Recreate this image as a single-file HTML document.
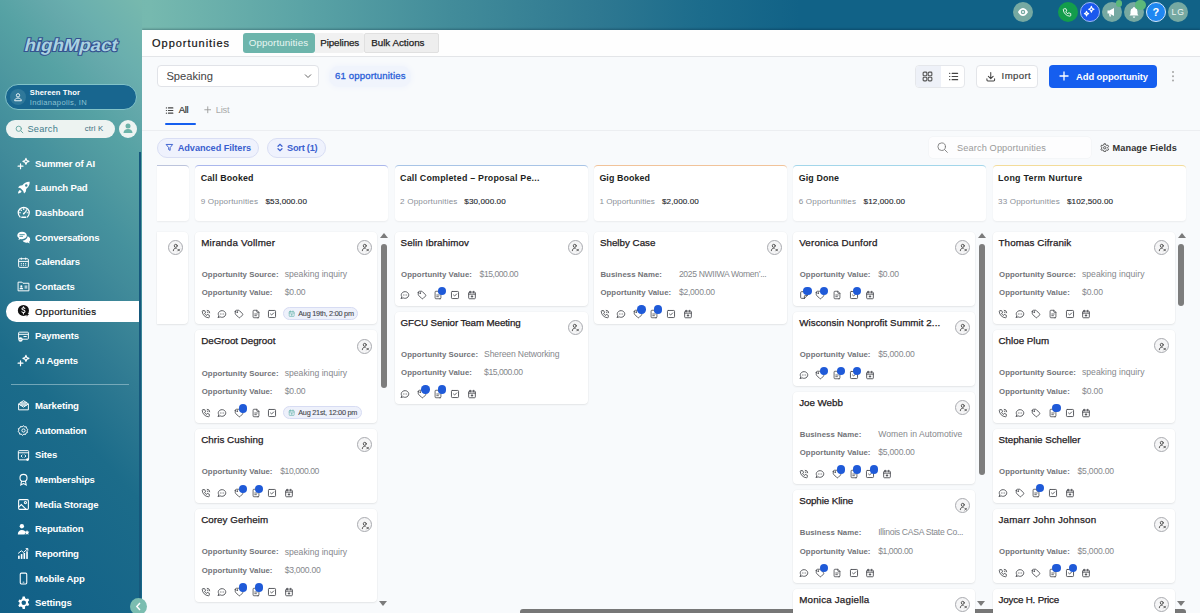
<!DOCTYPE html><html><head><meta charset="utf-8"><style>
*{box-sizing:border-box;margin:0;padding:0}
html,body{width:1200px;height:613px;overflow:hidden}
body{font-family:"Liberation Sans",sans-serif;position:relative;
background:linear-gradient(90deg,#6eb4ad 0px,#76b9af 150px,#5ba4a6 300px,#428c9a 450px,#2e7891 600px,#1c6c8c 700px,#116287 800px,#116287 1200px);}
#side{position:absolute;left:0;top:0;width:142px;height:613px;background:linear-gradient(228deg,#77b9ae 0px,#6aafae 52px,#65a9ab 73px,#56a2a4 111px,#4f99a0 145px,#45919d 178px,#418b9a 203px,#2f7a92 270px,#1c6c8a 337px,#136288 470px,#125f86 520px)}
.t{position:absolute;white-space:nowrap;line-height:1;-webkit-font-smoothing:antialiased}
.ic{position:absolute;overflow:visible}
.bdg{position:absolute;width:8.4px;height:8.4px;border-radius:50%;background:#1f5ad8}
.colh{position:absolute;top:165px;height:56px;background:#fff;border-top:1.2px solid;border-radius:4px;box-shadow:0 1px 2px rgba(0,0,0,.06)}
.card{position:absolute;background:#fff;border-radius:4px;box-shadow:0 1px 2px rgba(0,0,0,.07),0 0 0 0.5px rgba(0,0,0,.03)}
.avc{position:absolute;width:15px;height:15px;border-radius:50%;border:1px solid #a9abb0;background:#f5f5f6}
.chip{position:absolute;height:13.4px;border-radius:7px;background:#eef1fb;border:1px solid #d7dcf3}
.sarr{position:absolute;width:0;height:0;border-left:4px solid transparent;border-right:4px solid transparent}
.sarr.up{border-bottom:5px solid #7b7b7b}
.sarr.dn{border-top:5px solid #7b7b7b}
.sthumb{position:absolute;width:6px;border-radius:3px;background:#7d7d7d}
#main{position:absolute;left:142px;top:30px;width:1058px;height:583px;background:#f8fafc;box-shadow:0 -1px 2px rgba(0,20,40,.3)}
#hdr{position:absolute;left:142px;top:30px;width:1058px;height:27px;background:#fefefe;border-bottom:1px solid #e3e5e8}
.box{position:absolute}
</style></head><body>
<svg width="0" height="0" style="position:absolute">
<defs>
<symbol id="i-phone" viewBox="0 0 24 24"><g fill="none" stroke="currentColor" stroke-width="2.1" stroke-linecap="round" stroke-linejoin="round"><path d="M5 4h4l2 5-2.5 1.5a11 11 0 0 0 5 5L15 13l5 2v4a2 2 0 0 1-2 2A16 16 0 0 1 3 6a2 2 0 0 1 2-2"/><path d="M15 3a6 6 0 0 1 6 6"/><path d="M15 7a2 2 0 0 1 2 2"/></g></symbol>
<symbol id="i-chat" viewBox="0 0 24 24"><g fill="none" stroke="currentColor" stroke-width="2.2" stroke-linecap="round" stroke-linejoin="round"><path d="M3 20l1.3-3.9C1.976 12.663 2.874 8.228 6.4 5.726c3.526-2.501 8.59-2.296 11.845.48 3.255 2.777 3.695 7.266 1.029 10.501C16.608 19.942 11.659 20.922 7.7 19L3 20"/><path d="M8 12h.01M12 12h.01M16 12h.01"/></g></symbol>
<symbol id="i-tag" viewBox="0 0 24 24"><g fill="none" stroke="currentColor" stroke-width="2.2" stroke-linecap="round" stroke-linejoin="round"><circle cx="7.5" cy="7.5" r="1"/><path d="M3 6v5.172a2 2 0 0 0 .586 1.414l7.71 7.71a2.41 2.41 0 0 0 3.408 0l5.592-5.592a2.41 2.41 0 0 0 0-3.408l-7.71-7.71A2 2 0 0 0 11.172 3H6a3 3 0 0 0-3 3z"/></g></symbol>
<symbol id="i-doc" viewBox="0 0 24 24"><g fill="none" stroke="currentColor" stroke-width="2" stroke-linecap="round" stroke-linejoin="round"><path d="M14 3v4a1 1 0 0 0 1 1h4"/><path d="M17 21H7a2 2 0 0 1-2-2V5a2 2 0 0 1 2-2h7l5 5v11a2 2 0 0 1-2 2z"/><path d="M9 12h6M9 16h4"/></g></symbol>
<symbol id="i-check" viewBox="0 0 24 24"><g fill="none" stroke="currentColor" stroke-width="2.2" stroke-linecap="round" stroke-linejoin="round"><rect x="3.5" y="3.5" width="17" height="17" rx="2"/><path d="M8.5 12l2.5 2.5 5-5"/></g></symbol>
<symbol id="i-cal" viewBox="0 0 24 24"><g fill="none" stroke="currentColor" stroke-width="2.2" stroke-linecap="round" stroke-linejoin="round"><rect x="4" y="5" width="16" height="16" rx="2"/><path d="M16 3v4M8 3v4M4 10h16M10 15.5h4M12 13.5v4"/></g></symbol>
<symbol id="i-note" viewBox="0 0 24 24"><g fill="none" stroke="currentColor" stroke-width="2.2" stroke-linecap="round" stroke-linejoin="round"><path d="M13 20H6a2 2 0 0 1-2-2V6a2 2 0 0 1 2-2h12a2 2 0 0 1 2 2v7l-7 7z"/><path d="M13 20v-5a2 2 0 0 1 2-2h5"/></g></symbol>
<symbol id="i-user" viewBox="0 0 24 24"><g fill="none" stroke="currentColor" stroke-width="2.4" stroke-linecap="round" stroke-linejoin="round"><circle cx="10" cy="7.5" r="4"/><path d="M3.5 20.5c0-4 2.8-6.5 6.5-6.5h1.5"/><path d="M15.5 16.5l4.5 4.5M20 16.5l-4.5 4.5"/></g></symbol>
</defs></svg>
<div id="main"></div><div id="hdr"></div>
<svg width="0" height="0" style="position:absolute"><defs>
<symbol id="s-spark" viewBox="0 0 24 24"><g fill="none" stroke="#fff" stroke-width="2.2" stroke-linecap="round" stroke-linejoin="round"><path d="M16.5 2.5l1.6 3.9 3.9 1.6-3.9 1.6-1.6 3.9-1.6-3.9L11 8l3.9-1.6z"/><path d="M6.5 12.5v9M2 17h9"/></g></symbol>
<symbol id="s-rocket" viewBox="0 0 24 24"><path fill="#fff" d="M22.5 1.5c-5.3-.4-9.6 1.9-12.8 6.2L4.8 8.4 1.8 11.5l4.6 1.4 4.7 4.7 1.4 4.6 3.1-3 .7-4.9c4.3-3.2 6.6-7.5 6.2-12.8zM16.5 10a2.2 2.2 0 1 1 0-4.4 2.2 2.2 0 0 1 0 4.4zM5.2 15.8c-2 .7-3.2 2.8-3.4 6.4 3.6-.2 5.7-1.4 6.4-3.4z"/></symbol>
<symbol id="s-dash" viewBox="0 0 24 24"><g fill="none" stroke="#fff" stroke-width="2.2" stroke-linecap="round"><path d="M5.5 19.5A9.8 9.8 0 1 1 18.5 19.5"/><path d="M12 13.5l4-4"/><path d="M12 4.5v1.5M4.5 12H6M18 12h1.5M6.8 6.8l1 1M17.2 6.8l-1 1"/></g><rect x="7.5" y="18.5" width="9" height="3" rx="1" fill="#fff"/><circle cx="12" cy="13.5" r="1.6" fill="#fff"/></symbol>
<symbol id="s-conv" viewBox="0 0 24 24"><path fill="#fff" d="M9 1.5c4.7 0 8.5 2.9 8.5 6.5s-3.8 6.5-8.5 6.5c-.9 0-1.7-.1-2.5-.3L2.5 16l1-3.3C1.9 11.5 .5 9.9.5 8 .5 4.4 4.3 1.5 9 1.5z"/><path fill="#fff" d="M18.8 9.5c2.8.9 4.7 3 4.7 5.5 0 1.5-.7 2.9-1.9 3.9l.9 3.1-3.7-1.6c-.7.2-1.5.3-2.3.3-2.9 0-5.4-1.3-6.6-3.2 4.7-.4 8.5-3.5 8.9-8z"/><path stroke="#3b8d9d" stroke-width="1.6" stroke-linecap="round" d="M5 6.5h8M5 9.5h5"/></symbol>
<symbol id="s-cal" viewBox="0 0 24 24"><g fill="none" stroke="#fff" stroke-width="1.8"><rect x="3" y="5" width="18" height="16" rx="2"/><path d="M3 10h18M8 3v4M16 3v4M7 14h2M11 14h2M15 14h2M7 17h2M11 17h2M15 17h2"/></g></symbol>
<symbol id="s-contact" viewBox="0 0 24 24"><g fill="none" stroke="#fff" stroke-width="1.8"><path d="M2 4h7l2 2h11v14H2z"/></g><circle cx="8" cy="11.5" r="2" fill="#fff"/><path fill="#fff" d="M4.5 17c0-2 1.5-3 3.5-3s3.5 1 3.5 3z"/><rect x="14" y="10" width="5" height="6" fill="#fff" opacity=".6"/></symbol>
<symbol id="s-opp" viewBox="0 0 24 24"><circle cx="11" cy="11" r="9.5" fill="#111"/><path fill="none" stroke="#fff" stroke-width="1.8" stroke-linecap="round" d="M13.5 7.5c-.5-.8-1.5-1.2-2.5-1.2-1.5 0-2.6.8-2.6 2s1 1.7 2.6 2.1 2.7 1 2.7 2.3-1.2 2-2.7 2c-1.1 0-2.1-.5-2.6-1.3M11 4.8v1.5M11 15.7v1.5"/><path fill="#111" d="M15 15l6 3-2.5 1L17 22z"/></symbol>
<symbol id="s-pay" viewBox="0 0 24 24"><g fill="none" stroke="#fff" stroke-width="1.8"><rect x="3" y="4" width="18" height="13" rx="1.5"/><path d="M3 8h18M12 12h6"/></g><circle cx="6.5" cy="17.5" r="4" fill="#fff"/><path d="M4.8 17.5l1.2 1.2 2.2-2.2" stroke="#3d8e9e" stroke-width="1.4" fill="none"/></symbol>
<symbol id="s-mkt" viewBox="0 0 24 24"><g fill="none" stroke="#fff" stroke-width="1.8"><path d="M3 9l9-6 9 6v11H3z"/><path d="M3 9l9 6 9-6"/><rect x="7" y="6" width="10" height="6" fill="#fff" opacity=".7"/></g></symbol>
<symbol id="s-auto" viewBox="0 0 24 24"><g fill="none" stroke="#fff" stroke-width="1.8"><path d="M12 3l2 2.5 3-.5.5 3 2.5 2-1.5 2.7 1 2.8-2.8 1-1 2.9-3-.7L10 21l-2-2.4-3 .3-.5-3L2 14l1.5-2.6L2.5 8.5l2.8-1L6.5 4.6l3 .7z"/><circle cx="12" cy="12" r="3"/></g></symbol>
<symbol id="s-sites" viewBox="0 0 24 24"><g fill="none" stroke="#fff" stroke-width="1.8"><rect x="2.5" y="3" width="19" height="17" rx="1.5"/><path d="M2.5 7h19M10 10.5l-2.5 2.5 2.5 2.5M14 10.5l2.5 2.5-2.5 2.5"/></g><circle cx="19.5" cy="19.5" r="2.5" fill="#fff"/></symbol>
<symbol id="s-member" viewBox="0 0 24 24"><g fill="none" stroke="#fff" stroke-width="2"><circle cx="12" cy="9" r="6.5"/><path d="M8.5 14.5L7 22l5-2.5 5 2.5-1.5-7.5"/></g></symbol>
<symbol id="s-media" viewBox="0 0 24 24"><g fill="none" stroke="#fff" stroke-width="2"><rect x="3" y="3" width="18" height="18" rx="2"/><path d="M3 17l5-5 9 9"/><circle cx="15.5" cy="8.5" r="2"/></g></symbol>
<symbol id="s-rep" viewBox="0 0 24 24"><circle cx="9" cy="6" r="4" fill="#fff"/><path fill="#fff" d="M1.5 21c0-5 3-8 7.5-8s6 2 7 4l-2 4z"/><path fill="#fff" d="M18.5 13l1.4 2.9 3.1.4-2.3 2.2.6 3.1-2.8-1.5-2.8 1.5.6-3.1-2.3-2.2 3.1-.4z"/></symbol>
<symbol id="s-report" viewBox="0 0 24 24"><g fill="#fff"><rect x="2" y="16" width="3" height="6"/><rect x="7" y="13" width="3" height="9"/><rect x="12" y="11" width="3" height="11"/><rect x="17" y="8" width="3" height="14"/></g><path fill="none" stroke="#fff" stroke-width="1.8" d="M2 12l6-5 4 3 8-7M16 3h4v4"/></symbol>
<symbol id="s-mobile" viewBox="0 0 24 24"><g fill="none" stroke="#fff" stroke-width="2"><rect x="6" y="2" width="12" height="20" rx="2"/></g><rect x="10.5" y="18" width="3" height="1.5" fill="#fff"/></symbol>
<symbol id="s-settings" viewBox="0 0 24 24"><path fill="#fff" fill-rule="evenodd" d="M10 1h4l.6 3 2.3 1.3 2.9-1 2 3.4-2.3 2v2.6l2.3 2-2 3.4-2.9-1-2.3 1.3L14 23h-4l-.6-3-2.3-1.3-2.9 1-2-3.4 2.3-2v-2.6l-2.3-2 2-3.4 2.9 1L9.4 4zM12 8a4 4 0 1 0 0 8 4 4 0 0 0 0-8z"/></symbol>
</defs></svg>
<div id="side"></div><svg class="box" style="left:18px;top:33px;width:106px;height:26px" viewBox="0 0 106 26"><g transform="translate(4 0) skewX(-14)"><text x="6" y="18" textLength="93" lengthAdjust="spacingAndGlyphs" font-family="Liberation Sans" font-weight="700" font-size="17.5" fill="#a9d1e1" stroke="#34528f" stroke-width="2.2" paint-order="stroke" stroke-linejoin="miter">highMpact</text></g></svg><div class="box" style="left:5px;top:83.5px;width:131.5px;height:26px;border-radius:13px;background:#18668f;border:1px solid #82c3c8"></div><div class="box" style="left:10px;top:88.5px;width:16px;height:16px;border-radius:50%;background:#2f789a"></div><svg class="box" style="left:13px;top:91.5px;width:10px;height:10px" viewBox="0 0 24 24"><g fill="none" stroke="#e8f2f5" stroke-width="2.4"><circle cx="12" cy="8" r="4"/><path d="M4 21c0-4 3.5-6.5 8-6.5s8 2.5 8 6.5z"/></g></svg><div class="box" style="left:5.5px;top:120px;width:109.5px;height:17.6px;border-radius:9px;background:#edf3f1"></div><svg class="box" style="left:15px;top:124.5px;width:9px;height:9px" viewBox="0 0 24 24"><g fill="none" stroke="#6aa9a5" stroke-width="2.6" stroke-linecap="round"><circle cx="10" cy="10" r="7"/><path d="M15.5 15.5L21 21"/></g></svg><div class="box" style="left:119px;top:119.5px;width:18px;height:18px;border-radius:50%;background:#eef4f2"></div><svg class="box" style="left:122px;top:122px;width:12px;height:12px" viewBox="0 0 24 24"><circle cx="12" cy="8" r="5" fill="#6db3a9"/><path fill="#6db3a9" d="M3 22c0-5 4-8 9-8s9 3 9 8z"/></svg><div class="box" style="left:138.6px;top:151.5px;width:2.8px;height:462px;background:#16587c"></div><div class="box" style="left:11px;top:384px;width:118px;height:1px;background:#8fb9c7;opacity:.75"></div><svg class="box" style="left:17.3px;top:157.4px;width:13px;height:13px"><use href="#s-spark"/></svg><svg class="box" style="left:17.05px;top:181.05px;width:13.5px;height:13.5px"><use href="#s-rocket"/></svg><svg class="box" style="left:17.05px;top:205.85px;width:13.5px;height:13.5px"><use href="#s-dash"/></svg><svg class="box" style="left:17.05px;top:230.55px;width:13.5px;height:13.5px"><use href="#s-conv"/></svg><svg class="box" style="left:17.3px;top:255.5px;width:13px;height:13px"><use href="#s-cal"/></svg><svg class="box" style="left:17.3px;top:280.1px;width:13px;height:13px"><use href="#s-contact"/></svg><div class="box" style="left:6px;top:301.0px;width:133px;height:20.6px;background:#fff;border-radius:10.3px 0 0 10.3px"></div><svg class="box" style="left:16.6px;top:304.3px;width:14px;height:14px"><use href="#s-opp"/></svg><svg class="box" style="left:17.3px;top:329.5px;width:13px;height:13px"><use href="#s-pay"/></svg><svg class="box" style="left:17.3px;top:354.1px;width:13px;height:13px"><use href="#s-spark"/></svg><svg class="box" style="left:17.3px;top:399.1px;width:13px;height:13px"><use href="#s-mkt"/></svg><svg class="box" style="left:17.3px;top:423.8px;width:13px;height:13px"><use href="#s-auto"/></svg><svg class="box" style="left:17.3px;top:448.5px;width:13px;height:13px"><use href="#s-sites"/></svg><svg class="box" style="left:17.3px;top:473.1px;width:13px;height:13px"><use href="#s-member"/></svg><svg class="box" style="left:17.3px;top:497.8px;width:13px;height:13px"><use href="#s-media"/></svg><svg class="box" style="left:17.3px;top:522.5px;width:13px;height:13px"><use href="#s-rep"/></svg><svg class="box" style="left:17.3px;top:547.1px;width:13px;height:13px"><use href="#s-report"/></svg><svg class="box" style="left:17.3px;top:571.8px;width:13px;height:13px"><use href="#s-mobile"/></svg><svg class="box" style="left:17.05px;top:595.55px;width:13.5px;height:13.5px"><use href="#s-settings"/></svg><div class="box" style="left:1012.6px;top:1.8000000000000007px;width:20px;height:20px;border-radius:50%;background:#76a9a2;"></div><svg class="box" style="left:1016.6px;top:6.8px;width:12px;height:10px" viewBox="0 0 24 20"><path fill="#fff" d="M12 2C6 2 2 10 2 10s4 8 10 8 10-8 10-8-4-8-10-8zm0 12.5a4.5 4.5 0 1 1 0-9 4.5 4.5 0 0 1 0 9z"/><circle cx="12" cy="10" r="2" fill="#fff"/></svg><div class="box" style="left:1057.6px;top:1.8000000000000007px;width:20px;height:20px;border-radius:50%;background:#139d4c;"></div><svg class="box" style="left:1062.4px;top:6.6px;width:10.5px;height:10.5px" viewBox="0 0 24 24"><path d="M5 4h4l2 5-2.5 1.5a11 11 0 0 0 5 5L15 13l5 2v4a2 2 0 0 1-2 2A16 16 0 0 1 3 6a2 2 0 0 1 2-2" fill="none" stroke="#fff" stroke-width="2" stroke-linejoin="round"/></svg><div class="box" style="left:1079.6px;top:1.6000000000000014px;width:20.4px;height:20.4px;border-radius:50%;background:#1b58ee;border:1px solid #9fb8f7;"></div><svg class="box" style="left:1082.3px;top:4.6px;width:14.5px;height:14.5px" viewBox="0 0 24 24"><g fill="none" stroke="#fff" stroke-width="1.9" stroke-linejoin="round"><path d="M15.5 2c.4 3 1.5 4.6 4.5 5-3 .4-4.1 2-4.5 5-.4-3-1.5-4.6-4.5-5 3-.4 4.1-2 4.5-5z"/><path d="M7.5 10.5c.3 2.3 1.2 3.5 3.5 3.8-2.3.3-3.2 1.5-3.5 3.8-.3-2.3-1.2-3.5-3.5-3.8 2.3-.3 3.2-1.5 3.5-3.8z"/></g></svg><div class="box" style="left:1101.5px;top:1.8000000000000007px;width:20px;height:20px;border-radius:50%;background:#76a9a2;"></div><svg class="box" style="left:1105.5px;top:6px;width:12px;height:12px" viewBox="0 0 24 24"><path fill="#fff" d="M3 9h4l9-5v16l-9-5H3z"/><path fill="#fff" d="M6 15h3l1 6H7z"/></svg><div class="box" style="left:1115.6px;top:0.3999999999999999px;width:6.4px;height:6.4px;border-radius:50%;background:#5cb87a;"></div><div class="box" style="left:1124px;top:1.8000000000000007px;width:20px;height:20px;border-radius:50%;background:#78a9a1;"></div><svg class="box" style="left:1128px;top:5.5px;width:12px;height:12px" viewBox="0 0 24 24"><path fill="#fff" d="M12 2a2 2 0 0 1 2 2 7 7 0 0 1 5 7v5l2 3H3l2-3v-5a7 7 0 0 1 5-7 2 2 0 0 1 2-2zM9.5 21h5a2.5 2.5 0 0 1-5 0z"/></svg><div class="box" style="left:1135.3px;top:-0.40000000000000036px;width:10.4px;height:10.4px;border-radius:50%;background:#5cb87a;"></div><div class="box" style="left:1146.0px;top:1.6000000000000014px;width:20.4px;height:20.4px;border-radius:50%;background:#1f87f2;border:1px solid #d5e6fb;"></div><div class="box" style="left:1168.2px;top:1.8000000000000007px;width:20px;height:20px;border-radius:50%;background:#76a9a2;"></div><div class="box" style="left:243px;top:33px;width:71.7px;height:20px;background:#6db5ac;border-radius:3px"></div><div class="box" style="left:314.7px;top:33px;width:49.5px;height:20px;background:#f1f1f1;border-radius:0 2px 2px 0"></div><div class="box" style="left:364.2px;top:32.8px;width:74.8px;height:20.4px;background:#eeeeee;border:1px solid #e0e0e0;border-radius:2px"></div><div class="box" style="left:157.4px;top:65.4px;width:161.6px;height:22px;background:#fff;border:1px solid #e1e3e8;border-radius:4px"></div><svg class="box" style="left:304px;top:73px;width:8px;height:6px" viewBox="0 0 8 6"><path d="M1 1.5l3 3 3-3" fill="none" stroke="#666" stroke-width="1"/></svg><div class="box" style="left:329px;top:66px;width:82px;height:21px;background:#f0f4fc;border-radius:10px;box-shadow:0 0 5px 1px #f0f4fc"></div><div class="box" style="left:914.7px;top:64.8px;width:50.7px;height:23.4px;background:#fff;border:1px solid #e5e7eb;border-radius:4px;overflow:hidden"><div style="position:absolute;left:0;top:0;width:25px;height:100%;background:#eef1f8"></div></div><svg class="box" style="left:921.5px;top:71px;width:11px;height:11px" viewBox="0 0 24 24"><g fill="none" stroke="#555" stroke-width="2.4"><rect x="2.5" y="2.5" width="8" height="8" rx="2"/><rect x="13.5" y="2.5" width="8" height="8" rx="2"/><rect x="2.5" y="13.5" width="8" height="8" rx="2"/><rect x="13.5" y="13.5" width="8" height="8" rx="2"/></g></svg><svg class="box" style="left:947.5px;top:71px;width:11px;height:11px" viewBox="0 0 24 24"><g fill="none" stroke="#444" stroke-width="2.6" stroke-linecap="round"><path d="M9 5h12M9 12h12M9 19h12M3.5 5h.5M3.5 12h.5M3.5 19h.5"/></g></svg><div class="box" style="left:976.3px;top:65.2px;width:62.1px;height:22.8px;background:#fff;border:1px solid #e3e5e9;border-radius:4px"></div><svg class="box" style="left:984.5px;top:70.5px;width:11.5px;height:11.5px" viewBox="0 0 24 24"><g fill="none" stroke="#444" stroke-width="2.2" stroke-linecap="round" stroke-linejoin="round"><path d="M4 16v3a2 2 0 0 0 2 2h12a2 2 0 0 0 2-2v-3M7 11l5 5 5-5M12 3v13"/></g></svg><div class="box" style="left:1049px;top:65.2px;width:108px;height:22.5px;background:#155eef;border-radius:4px"></div><svg class="box" style="left:1059.4px;top:71.4px;width:10px;height:10px" viewBox="0 0 10 10"><path d="M5 0.5v9M0.5 5h9" stroke="#fff" stroke-width="1.3"/></svg><div class="box" style="left:1172.3px;top:71px;width:1.6px;height:1.6px;background:#a5a5a5;border-radius:1px;box-shadow:0 4.3px 0 #a5a5a5,0 8.6px 0 #a5a5a5"></div><svg class="box" style="left:164.8px;top:105.5px;width:9px;height:9px" viewBox="0 0 24 24"><g fill="none" stroke="#444" stroke-width="2.8" stroke-linecap="round"><path d="M9 5h12M9 12h12M9 19h12M3.5 5h.5M3.5 12h.5M3.5 19h.5"/></g></svg><div class="box" style="left:164.6px;top:123.2px;width:31.6px;height:2px;background:#155eef;border-radius:1px"></div><svg class="box" style="left:203.8px;top:106px;width:7.5px;height:7.5px" viewBox="0 0 10 10"><path d="M5 0.5v9M0.5 5h9" stroke="#9a9a9a" stroke-width="1.2"/></svg><div class="box" style="left:142px;top:129.5px;width:1058px;height:1px;background:#eceef1"></div><div class="box" style="left:157.1px;top:138.2px;width:102.1px;height:19.5px;background:#eff2fd;border:1px solid #d9def4;border-radius:10px"></div><svg class="box" style="left:165.3px;top:143.2px;width:8.8px;height:8.8px" viewBox="0 0 24 24"><path d="M3 4h18l-7 8.5V20l-4-2v-5.5z" fill="none" stroke="#3a5fcf" stroke-width="2.6" stroke-linejoin="round"/></svg><div class="box" style="left:266.8px;top:138.2px;width:59.6px;height:19.5px;background:#eff2fd;border:1px solid #d9def4;border-radius:10px"></div><svg class="box" style="left:276.8px;top:143px;width:6px;height:9px" viewBox="0 0 12 18"><path d="M2 6.5l4-4 4 4M2 11.5l4 4 4-4" fill="none" stroke="#3a5fcf" stroke-width="2.4" stroke-linecap="round"/></svg><div class="box" style="left:928.7px;top:137px;width:162.3px;height:20.5px;background:#fdfdfe;border-radius:4px;box-shadow:0 0 0 0.5px #f0f1f3"></div><svg class="box" style="left:936px;top:140.8px;width:13px;height:13px" viewBox="0 0 24 24"><g fill="none" stroke="#777" stroke-width="1.6" stroke-linecap="round"><circle cx="10.5" cy="10.5" r="7"/><path d="M16 16l5 5"/></g></svg><svg class="box" style="left:1100px;top:142.5px;width:9.5px;height:9.5px" viewBox="0 0 24 24"><g fill="none" stroke="#444" stroke-width="2.2"><path d="M10 2h4l.6 3 2.3 1.3 2.9-1 2 3.4-2.3 2v2.6l2.3 2-2 3.4-2.9-1-2.3 1.3L14 22h-4l-.6-3-2.3-1.3-2.9 1-2-3.4 2.3-2v-2.6l-2.3-2 2-3.4 2.9 1L9.4 5z"/><circle cx="12" cy="12" r="3"/></g></svg><div class="box" style="left:130px;top:598px;width:17px;height:17px;border-radius:50%;background:#7bbdb0"></div><svg class="box" style="left:135px;top:602px;width:7px;height:9px" viewBox="0 0 7 9"><path d="M5 1L1.8 4.5 5 8" fill="none" stroke="#fff" stroke-width="1.4"/></svg><div class="box" style="left:520px;top:608.8px;width:666px;height:6px;border-radius:3px;background:#777"></div><div class="colh" style="left:157px;width:31.8px;border-top-color:#bcc4dc;border-radius:0 4px 4px 0"></div><div class="card" style="left:157px;top:231.5px;width:30.6px;height:92.6px;border-radius:0 4px 4px 0"></div><div class="avc" style="left:168.1px;top:239.9px"><svg style="position:absolute;left:2.6px;top:2.4px;width:9px;height:9px;color:#4a4a4a"><use href="#i-user"/></svg></div><div class="colh" style="left:195.2px;width:193px;border-top-color:#aab7ec"></div><div class="card" style="left:195.2px;top:231.5px;width:182px;height:92.6px"></div><div class="avc" style="left:357.09999999999997px;top:239.6px"><svg style="position:absolute;left:2.6px;top:2.4px;width:9px;height:9px;color:#4a4a4a"><use href="#i-user"/></svg></div><svg class="ic" style="left:200.79999999999998px;top:309.0px;width:10px;height:10px;color:#4d4f54"><use href="#i-phone"/></svg><svg class="ic" style="left:217.39999999999998px;top:309.0px;width:10px;height:10px;color:#4d4f54"><use href="#i-chat"/></svg><svg class="ic" style="left:234.0px;top:309.0px;width:10px;height:10px;color:#4d4f54"><use href="#i-tag"/></svg><svg class="ic" style="left:250.6px;top:309.0px;width:10px;height:10px;color:#4d4f54"><use href="#i-doc"/></svg><svg class="ic" style="left:267.2px;top:309.0px;width:10px;height:10px;color:#4d4f54"><use href="#i-check"/></svg><div class="chip" style="left:283.2px;top:306.8px;width:75px"></div><svg class="ic" style="left:287.7px;top:310.3px;width:7.4px;height:7.4px;color:#6fb8b0"><use href="#i-cal"/></svg><div class="card" style="left:195.2px;top:330.4px;width:182px;height:92.6px"></div><div class="avc" style="left:357.09999999999997px;top:338.5px"><svg style="position:absolute;left:2.6px;top:2.4px;width:9px;height:9px;color:#4a4a4a"><use href="#i-user"/></svg></div><svg class="ic" style="left:200.79999999999998px;top:407.9px;width:10px;height:10px;color:#4d4f54"><use href="#i-phone"/></svg><svg class="ic" style="left:217.39999999999998px;top:407.9px;width:10px;height:10px;color:#4d4f54"><use href="#i-chat"/></svg><svg class="ic" style="left:234.0px;top:407.9px;width:10px;height:10px;color:#4d4f54"><use href="#i-tag"/></svg><div class="bdg" style="left:238.5px;top:404.29999999999995px"></div><svg class="ic" style="left:250.6px;top:407.9px;width:10px;height:10px;color:#4d4f54"><use href="#i-doc"/></svg><svg class="ic" style="left:267.2px;top:407.9px;width:10px;height:10px;color:#4d4f54"><use href="#i-check"/></svg><div class="chip" style="left:283.2px;top:405.7px;width:79px"></div><svg class="ic" style="left:287.7px;top:409.2px;width:7.4px;height:7.4px;color:#6fb8b0"><use href="#i-cal"/></svg><div class="card" style="left:195.2px;top:429.29999999999995px;width:182px;height:74px"></div><div class="avc" style="left:357.09999999999997px;top:437.4px"><svg style="position:absolute;left:2.6px;top:2.4px;width:9px;height:9px;color:#4a4a4a"><use href="#i-user"/></svg></div><svg class="ic" style="left:200.79999999999998px;top:488.19999999999993px;width:10px;height:10px;color:#4d4f54"><use href="#i-phone"/></svg><svg class="ic" style="left:217.39999999999998px;top:488.19999999999993px;width:10px;height:10px;color:#4d4f54"><use href="#i-chat"/></svg><svg class="ic" style="left:234.0px;top:488.19999999999993px;width:10px;height:10px;color:#4d4f54"><use href="#i-tag"/></svg><div class="bdg" style="left:238.5px;top:484.5999999999999px"></div><svg class="ic" style="left:250.6px;top:488.19999999999993px;width:10px;height:10px;color:#4d4f54"><use href="#i-doc"/></svg><div class="bdg" style="left:255.1px;top:484.5999999999999px"></div><svg class="ic" style="left:267.2px;top:488.19999999999993px;width:10px;height:10px;color:#4d4f54"><use href="#i-check"/></svg><svg class="ic" style="left:283.79999999999995px;top:488.19999999999993px;width:10px;height:10px;color:#4d4f54"><use href="#i-cal"/></svg><div class="card" style="left:195.2px;top:509.29999999999995px;width:182px;height:92.6px"></div><div class="avc" style="left:357.09999999999997px;top:517.4px"><svg style="position:absolute;left:2.6px;top:2.4px;width:9px;height:9px;color:#4a4a4a"><use href="#i-user"/></svg></div><svg class="ic" style="left:200.79999999999998px;top:586.8000000000001px;width:10px;height:10px;color:#4d4f54"><use href="#i-phone"/></svg><svg class="ic" style="left:217.39999999999998px;top:586.8000000000001px;width:10px;height:10px;color:#4d4f54"><use href="#i-chat"/></svg><svg class="ic" style="left:234.0px;top:586.8000000000001px;width:10px;height:10px;color:#4d4f54"><use href="#i-tag"/></svg><div class="bdg" style="left:238.5px;top:583.2px"></div><svg class="ic" style="left:250.6px;top:586.8000000000001px;width:10px;height:10px;color:#4d4f54"><use href="#i-doc"/></svg><div class="bdg" style="left:255.1px;top:583.2px"></div><svg class="ic" style="left:267.2px;top:586.8000000000001px;width:10px;height:10px;color:#4d4f54"><use href="#i-check"/></svg><svg class="ic" style="left:283.79999999999995px;top:586.8000000000001px;width:10px;height:10px;color:#4d4f54"><use href="#i-cal"/></svg><div class="sarr up" style="left:380.2px;top:233px"></div><div class="sarr dn" style="left:379.4px;top:601px"></div><div class="sthumb" style="left:380.7px;top:244px;height:144px"></div><div class="colh" style="left:394.6px;width:193px;border-top-color:#a8c4e6"></div><div class="card" style="left:394.6px;top:231.5px;width:193px;height:74px"></div><div class="avc" style="left:567.5px;top:239.6px"><svg style="position:absolute;left:2.6px;top:2.4px;width:9px;height:9px;color:#4a4a4a"><use href="#i-user"/></svg></div><svg class="ic" style="left:400.20000000000005px;top:290.4px;width:10px;height:10px;color:#4d4f54"><use href="#i-chat"/></svg><svg class="ic" style="left:416.80000000000007px;top:290.4px;width:10px;height:10px;color:#4d4f54"><use href="#i-tag"/></svg><svg class="ic" style="left:433.40000000000003px;top:290.4px;width:10px;height:10px;color:#4d4f54"><use href="#i-doc"/></svg><div class="bdg" style="left:437.90000000000003px;top:286.79999999999995px"></div><svg class="ic" style="left:450.00000000000006px;top:290.4px;width:10px;height:10px;color:#4d4f54"><use href="#i-check"/></svg><svg class="ic" style="left:466.6px;top:290.4px;width:10px;height:10px;color:#4d4f54"><use href="#i-cal"/></svg><div class="card" style="left:394.6px;top:311.5px;width:193px;height:92.6px"></div><div class="avc" style="left:567.5px;top:319.6px"><svg style="position:absolute;left:2.6px;top:2.4px;width:9px;height:9px;color:#4a4a4a"><use href="#i-user"/></svg></div><svg class="ic" style="left:400.20000000000005px;top:389.0px;width:10px;height:10px;color:#4d4f54"><use href="#i-chat"/></svg><svg class="ic" style="left:416.80000000000007px;top:389.0px;width:10px;height:10px;color:#4d4f54"><use href="#i-tag"/></svg><div class="bdg" style="left:421.30000000000007px;top:385.4px"></div><svg class="ic" style="left:433.40000000000003px;top:389.0px;width:10px;height:10px;color:#4d4f54"><use href="#i-doc"/></svg><div class="bdg" style="left:437.90000000000003px;top:385.4px"></div><svg class="ic" style="left:450.00000000000006px;top:389.0px;width:10px;height:10px;color:#4d4f54"><use href="#i-check"/></svg><svg class="ic" style="left:466.6px;top:389.0px;width:10px;height:10px;color:#4d4f54"><use href="#i-cal"/></svg><div class="colh" style="left:593.9px;width:193px;border-top-color:#f1c39a"></div><div class="card" style="left:593.9px;top:231.5px;width:193px;height:92.6px"></div><div class="avc" style="left:766.8px;top:239.6px"><svg style="position:absolute;left:2.6px;top:2.4px;width:9px;height:9px;color:#4a4a4a"><use href="#i-user"/></svg></div><svg class="ic" style="left:599.5px;top:309.0px;width:10px;height:10px;color:#4d4f54"><use href="#i-phone"/></svg><svg class="ic" style="left:616.1px;top:309.0px;width:10px;height:10px;color:#4d4f54"><use href="#i-chat"/></svg><svg class="ic" style="left:632.7px;top:309.0px;width:10px;height:10px;color:#4d4f54"><use href="#i-tag"/></svg><div class="bdg" style="left:637.2px;top:305.4px"></div><svg class="ic" style="left:649.3px;top:309.0px;width:10px;height:10px;color:#4d4f54"><use href="#i-doc"/></svg><div class="bdg" style="left:653.8px;top:305.4px"></div><svg class="ic" style="left:665.9px;top:309.0px;width:10px;height:10px;color:#4d4f54"><use href="#i-check"/></svg><svg class="ic" style="left:682.5px;top:309.0px;width:10px;height:10px;color:#4d4f54"><use href="#i-cal"/></svg><div class="colh" style="left:793.2px;width:193px;border-top-color:#a3d6ea"></div><div class="card" style="left:793.2px;top:231.5px;width:182px;height:74px"></div><div class="avc" style="left:955.1px;top:239.6px"><svg style="position:absolute;left:2.6px;top:2.4px;width:9px;height:9px;color:#4a4a4a"><use href="#i-user"/></svg></div><svg class="ic" style="left:798.8000000000001px;top:290.4px;width:10px;height:10px;color:#4d4f54"><use href="#i-note"/></svg><div class="bdg" style="left:803.3000000000001px;top:286.79999999999995px"></div><svg class="ic" style="left:815.4000000000001px;top:290.4px;width:10px;height:10px;color:#4d4f54"><use href="#i-tag"/></svg><div class="bdg" style="left:819.9000000000001px;top:286.79999999999995px"></div><svg class="ic" style="left:832.0000000000001px;top:290.4px;width:10px;height:10px;color:#4d4f54"><use href="#i-doc"/></svg><svg class="ic" style="left:848.6px;top:290.4px;width:10px;height:10px;color:#4d4f54"><use href="#i-check"/></svg><div class="bdg" style="left:853.1px;top:286.79999999999995px"></div><svg class="ic" style="left:865.2px;top:290.4px;width:10px;height:10px;color:#4d4f54"><use href="#i-cal"/></svg><div class="card" style="left:793.2px;top:311.5px;width:182px;height:74px"></div><div class="avc" style="left:955.1px;top:319.6px"><svg style="position:absolute;left:2.6px;top:2.4px;width:9px;height:9px;color:#4a4a4a"><use href="#i-user"/></svg></div><svg class="ic" style="left:798.8000000000001px;top:370.4px;width:10px;height:10px;color:#4d4f54"><use href="#i-chat"/></svg><svg class="ic" style="left:815.4000000000001px;top:370.4px;width:10px;height:10px;color:#4d4f54"><use href="#i-tag"/></svg><div class="bdg" style="left:819.9000000000001px;top:366.79999999999995px"></div><svg class="ic" style="left:832.0000000000001px;top:370.4px;width:10px;height:10px;color:#4d4f54"><use href="#i-doc"/></svg><div class="bdg" style="left:836.5000000000001px;top:366.79999999999995px"></div><svg class="ic" style="left:848.6px;top:370.4px;width:10px;height:10px;color:#4d4f54"><use href="#i-check"/></svg><div class="bdg" style="left:853.1px;top:366.79999999999995px"></div><svg class="ic" style="left:865.2px;top:370.4px;width:10px;height:10px;color:#4d4f54"><use href="#i-cal"/></svg><div class="card" style="left:793.2px;top:391.5px;width:182px;height:92.6px"></div><div class="avc" style="left:955.1px;top:399.6px"><svg style="position:absolute;left:2.6px;top:2.4px;width:9px;height:9px;color:#4a4a4a"><use href="#i-user"/></svg></div><svg class="ic" style="left:798.8000000000001px;top:469.0px;width:10px;height:10px;color:#4d4f54"><use href="#i-phone"/></svg><svg class="ic" style="left:815.4000000000001px;top:469.0px;width:10px;height:10px;color:#4d4f54"><use href="#i-chat"/></svg><svg class="ic" style="left:832.0000000000001px;top:469.0px;width:10px;height:10px;color:#4d4f54"><use href="#i-tag"/></svg><div class="bdg" style="left:836.5000000000001px;top:465.4px"></div><svg class="ic" style="left:848.6px;top:469.0px;width:10px;height:10px;color:#4d4f54"><use href="#i-doc"/></svg><div class="bdg" style="left:853.1px;top:465.4px"></div><svg class="ic" style="left:865.2px;top:469.0px;width:10px;height:10px;color:#4d4f54"><use href="#i-check"/></svg><div class="bdg" style="left:869.7px;top:465.4px"></div><svg class="ic" style="left:881.8000000000001px;top:469.0px;width:10px;height:10px;color:#4d4f54"><use href="#i-cal"/></svg><div class="card" style="left:793.2px;top:490.1px;width:182px;height:92.6px"></div><div class="avc" style="left:955.1px;top:498.20000000000005px"><svg style="position:absolute;left:2.6px;top:2.4px;width:9px;height:9px;color:#4a4a4a"><use href="#i-user"/></svg></div><svg class="ic" style="left:798.8000000000001px;top:567.6000000000001px;width:10px;height:10px;color:#4d4f54"><use href="#i-chat"/></svg><svg class="ic" style="left:815.4000000000001px;top:567.6000000000001px;width:10px;height:10px;color:#4d4f54"><use href="#i-tag"/></svg><div class="bdg" style="left:819.9000000000001px;top:564.0000000000001px"></div><svg class="ic" style="left:832.0000000000001px;top:567.6000000000001px;width:10px;height:10px;color:#4d4f54"><use href="#i-doc"/></svg><svg class="ic" style="left:848.6px;top:567.6000000000001px;width:10px;height:10px;color:#4d4f54"><use href="#i-check"/></svg><svg class="ic" style="left:865.2px;top:567.6000000000001px;width:10px;height:10px;color:#4d4f54"><use href="#i-cal"/></svg><div class="card" style="left:793.2px;top:588.7px;width:182px;height:92.6px"></div><div class="avc" style="left:955.1px;top:596.8000000000001px"><svg style="position:absolute;left:2.6px;top:2.4px;width:9px;height:9px;color:#4a4a4a"><use href="#i-user"/></svg></div><div class="sarr up" style="left:978.2px;top:233px"></div><div class="sarr dn" style="left:977.4000000000001px;top:601px"></div><div class="sthumb" style="left:978.7px;top:244px;height:231px"></div><div class="colh" style="left:992.5px;width:193px;border-top-color:#f3dc9a"></div><div class="card" style="left:992.5px;top:231.5px;width:182px;height:92.6px"></div><div class="avc" style="left:1154.4px;top:239.6px"><svg style="position:absolute;left:2.6px;top:2.4px;width:9px;height:9px;color:#4a4a4a"><use href="#i-user"/></svg></div><svg class="ic" style="left:998.1px;top:309.0px;width:10px;height:10px;color:#4d4f54"><use href="#i-phone"/></svg><svg class="ic" style="left:1014.7px;top:309.0px;width:10px;height:10px;color:#4d4f54"><use href="#i-chat"/></svg><svg class="ic" style="left:1031.3px;top:309.0px;width:10px;height:10px;color:#4d4f54"><use href="#i-tag"/></svg><svg class="ic" style="left:1047.9px;top:309.0px;width:10px;height:10px;color:#4d4f54"><use href="#i-doc"/></svg><svg class="ic" style="left:1064.5px;top:309.0px;width:10px;height:10px;color:#4d4f54"><use href="#i-check"/></svg><svg class="ic" style="left:1081.1px;top:309.0px;width:10px;height:10px;color:#4d4f54"><use href="#i-cal"/></svg><div class="card" style="left:992.5px;top:330.1px;width:182px;height:92.6px"></div><div class="avc" style="left:1154.4px;top:338.20000000000005px"><svg style="position:absolute;left:2.6px;top:2.4px;width:9px;height:9px;color:#4a4a4a"><use href="#i-user"/></svg></div><svg class="ic" style="left:998.1px;top:407.6px;width:10px;height:10px;color:#4d4f54"><use href="#i-phone"/></svg><svg class="ic" style="left:1014.7px;top:407.6px;width:10px;height:10px;color:#4d4f54"><use href="#i-chat"/></svg><svg class="ic" style="left:1031.3px;top:407.6px;width:10px;height:10px;color:#4d4f54"><use href="#i-tag"/></svg><svg class="ic" style="left:1047.9px;top:407.6px;width:10px;height:10px;color:#4d4f54"><use href="#i-doc"/></svg><div class="bdg" style="left:1052.4px;top:404.0px"></div><svg class="ic" style="left:1064.5px;top:407.6px;width:10px;height:10px;color:#4d4f54"><use href="#i-check"/></svg><svg class="ic" style="left:1081.1px;top:407.6px;width:10px;height:10px;color:#4d4f54"><use href="#i-cal"/></svg><div class="card" style="left:992.5px;top:428.70000000000005px;width:182px;height:74px"></div><div class="avc" style="left:1154.4px;top:436.80000000000007px"><svg style="position:absolute;left:2.6px;top:2.4px;width:9px;height:9px;color:#4a4a4a"><use href="#i-user"/></svg></div><svg class="ic" style="left:998.1px;top:487.6px;width:10px;height:10px;color:#4d4f54"><use href="#i-chat"/></svg><svg class="ic" style="left:1014.7px;top:487.6px;width:10px;height:10px;color:#4d4f54"><use href="#i-tag"/></svg><svg class="ic" style="left:1031.3px;top:487.6px;width:10px;height:10px;color:#4d4f54"><use href="#i-doc"/></svg><div class="bdg" style="left:1035.8px;top:484.0px"></div><svg class="ic" style="left:1047.9px;top:487.6px;width:10px;height:10px;color:#4d4f54"><use href="#i-check"/></svg><svg class="ic" style="left:1064.5px;top:487.6px;width:10px;height:10px;color:#4d4f54"><use href="#i-cal"/></svg><div class="card" style="left:992.5px;top:508.70000000000005px;width:182px;height:74px"></div><div class="avc" style="left:1154.4px;top:516.8000000000001px"><svg style="position:absolute;left:2.6px;top:2.4px;width:9px;height:9px;color:#4a4a4a"><use href="#i-user"/></svg></div><svg class="ic" style="left:998.1px;top:567.6000000000001px;width:10px;height:10px;color:#4d4f54"><use href="#i-phone"/></svg><svg class="ic" style="left:1014.7px;top:567.6000000000001px;width:10px;height:10px;color:#4d4f54"><use href="#i-chat"/></svg><svg class="ic" style="left:1031.3px;top:567.6000000000001px;width:10px;height:10px;color:#4d4f54"><use href="#i-tag"/></svg><svg class="ic" style="left:1047.9px;top:567.6000000000001px;width:10px;height:10px;color:#4d4f54"><use href="#i-doc"/></svg><div class="bdg" style="left:1052.4px;top:564.0000000000001px"></div><svg class="ic" style="left:1064.5px;top:567.6000000000001px;width:10px;height:10px;color:#4d4f54"><use href="#i-check"/></svg><div class="bdg" style="left:1069.0px;top:564.0000000000001px"></div><svg class="ic" style="left:1081.1px;top:567.6000000000001px;width:10px;height:10px;color:#4d4f54"><use href="#i-cal"/></svg><div class="card" style="left:992.5px;top:588.7px;width:182px;height:92.6px"></div><div class="avc" style="left:1154.4px;top:596.8000000000001px"><svg style="position:absolute;left:2.6px;top:2.4px;width:9px;height:9px;color:#4a4a4a"><use href="#i-user"/></svg></div><div class="sarr up" style="left:1177.5px;top:233px"></div><div class="sarr dn" style="left:1176.7px;top:601px"></div><div class="sthumb" style="left:1178.0px;top:244px;height:62px"></div><div class="t" style="left:29.80px;top:89.00px;font-size:7.6px;font-weight:700;color:#ffffff;letter-spacing:0.112px;">Shereen Thor</div><div class="t" style="left:29.80px;top:99.00px;font-size:7.6px;font-weight:400;color:#8cc3d1;letter-spacing:0.309px;">Indianapolis, IN</div><div class="t" style="left:27.50px;top:125.00px;font-size:9.2px;font-weight:400;color:#3f7b8b;letter-spacing:0.229px;">Search</div><div class="t" style="left:84.80px;top:125.00px;font-size:7.8px;font-weight:500;color:#3e6f7f;letter-spacing:0.122px;">ctrl K</div><div class="t" style="left:35.00px;top:159.00px;font-size:9.6px;font-weight:700;color:#ffffff;letter-spacing:-0.175px;">Summer of AI</div><div class="t" style="left:35.00px;top:183.00px;font-size:9.6px;font-weight:700;color:#ffffff;letter-spacing:-0.184px;">Launch Pad</div><div class="t" style="left:35.00px;top:208.00px;font-size:9.6px;font-weight:700;color:#ffffff;letter-spacing:-0.189px;">Dashboard</div><div class="t" style="left:35.00px;top:233.00px;font-size:9.6px;font-weight:700;color:#ffffff;letter-spacing:-0.174px;">Conversations</div><div class="t" style="left:35.00px;top:257.00px;font-size:9.6px;font-weight:700;color:#ffffff;letter-spacing:-0.174px;">Calendars</div><div class="t" style="left:35.00px;top:282.00px;font-size:9.6px;font-weight:700;color:#ffffff;letter-spacing:-0.174px;">Contacts</div><div class="t" style="left:35.00px;top:307.00px;font-size:9.6px;font-weight:400;color:#141414;letter-spacing:0.334px;-webkit-text-stroke:0.2px #141414">Opportunities</div><div class="t" style="left:35.00px;top:331.00px;font-size:9.6px;font-weight:700;color:#ffffff;letter-spacing:-0.192px;">Payments</div><div class="t" style="left:35.00px;top:356.00px;font-size:9.6px;font-weight:700;color:#ffffff;letter-spacing:-0.167px;">AI Agents</div><div class="t" style="left:35.00px;top:401.00px;font-size:9.6px;font-weight:700;color:#ffffff;letter-spacing:-0.170px;">Marketing</div><div class="t" style="left:35.00px;top:426.00px;font-size:9.6px;font-weight:700;color:#ffffff;letter-spacing:-0.180px;">Automation</div><div class="t" style="left:35.00px;top:450.00px;font-size:9.6px;font-weight:700;color:#ffffff;letter-spacing:-0.155px;">Sites</div><div class="t" style="left:35.00px;top:475.00px;font-size:9.6px;font-weight:700;color:#ffffff;letter-spacing:-0.190px;">Memberships</div><div class="t" style="left:35.00px;top:500.00px;font-size:9.6px;font-weight:700;color:#ffffff;letter-spacing:-0.171px;">Media Storage</div><div class="t" style="left:35.00px;top:524.00px;font-size:9.6px;font-weight:700;color:#ffffff;letter-spacing:-0.170px;">Reputation</div><div class="t" style="left:35.00px;top:549.00px;font-size:9.6px;font-weight:700;color:#ffffff;letter-spacing:-0.170px;">Reporting</div><div class="t" style="left:35.00px;top:574.00px;font-size:9.6px;font-weight:700;color:#ffffff;letter-spacing:-0.174px;">Mobile App</div><div class="t" style="left:35.00px;top:598.00px;font-size:9.6px;font-weight:700;color:#ffffff;letter-spacing:-0.160px;">Settings</div><div class="t" style="left:1152.40px;top:7.00px;font-size:11px;font-weight:700;color:#fff;letter-spacing:0.000px;">?</div><div class="t" style="left:1171.60px;top:8.00px;font-size:8.6px;font-weight:400;color:#eef4f2;letter-spacing:0.966px;">LG</div><div class="t" style="left:152.10px;top:38.00px;font-size:11px;font-weight:400;color:#141414;letter-spacing:0.966px;-webkit-text-stroke:0.2px #141414">Opportunities</div><div class="t" style="left:248.70px;top:38.00px;font-size:9.8px;font-weight:400;color:#e9f5f2;letter-spacing:0.094px;">Opportunities</div><div class="t" style="left:320.20px;top:38.00px;font-size:9.8px;font-weight:400;color:#222;letter-spacing:-0.085px;-webkit-text-stroke:0.25px #222">Pipelines</div><div class="t" style="left:371.20px;top:38.00px;font-size:9.8px;font-weight:400;color:#222;letter-spacing:-0.006px;-webkit-text-stroke:0.25px #222">Bulk Actions</div><div class="t" style="left:166.40px;top:71.00px;font-size:11.2px;font-weight:400;color:#444;letter-spacing:-0.007px;">Speaking</div><div class="t" style="left:335.00px;top:71.00px;font-size:9.6px;font-weight:400;color:#2a5fd8;letter-spacing:0.145px;-webkit-text-stroke:0.3px #2a5fd8">61 opportunities</div><div class="t" style="left:1001.60px;top:71.00px;font-size:9.6px;font-weight:400;color:#444;letter-spacing:0.399px;-webkit-text-stroke:0.2px #444">Import</div><div class="t" style="left:1076.00px;top:72.00px;font-size:9.4px;font-weight:700;color:#ffffff;letter-spacing:-0.060px;">Add opportunity</div><div class="t" style="left:178.80px;top:105.00px;font-size:9.6px;font-weight:400;color:#333;letter-spacing:-0.357px;-webkit-text-stroke:0.2px #333">All</div><div class="t" style="left:215.80px;top:105.00px;font-size:9.4px;font-weight:400;color:#aaaaaa;letter-spacing:-0.298px;">List</div><div class="t" style="left:177.70px;top:144.00px;font-size:9.2px;font-weight:700;color:#3a5fcf;letter-spacing:-0.047px;">Advanced Filters</div><div class="t" style="left:287.00px;top:144.00px;font-size:9.2px;font-weight:700;color:#3a5fcf;letter-spacing:-0.220px;">Sort (1)</div><div class="t" style="left:957.00px;top:144.00px;font-size:9.2px;font-weight:400;color:#9a9a9a;letter-spacing:0.134px;">Search Opportunities</div><div class="t" style="left:1112.50px;top:144.00px;font-size:9.2px;font-weight:700;color:#333;letter-spacing:0.091px;">Manage Fields</div><div class="t" style="left:200.70px;top:174.00px;font-size:8.9px;font-weight:700;color:#1d1f24;letter-spacing:0.155px;">Call Booked</div><div class="t" style="left:200.70px;top:198.00px;font-size:8.1px;font-weight:400;color:#8a8f98;letter-spacing:0.174px;">9 Opportunities</div><div class="t" style="left:265.50px;top:198.00px;font-size:8.1px;font-weight:400;color:#22242a;letter-spacing:0.098px;-webkit-text-stroke:0.12px #22242a">$53,000.00</div><div class="t" style="left:201.20px;top:238.00px;font-size:9.8px;font-weight:400;color:#1f2023;letter-spacing:0.214px;-webkit-text-stroke:0.25px #1f2023">Miranda Vollmer</div><div class="t" style="left:201.70px;top:271.00px;font-size:7.8px;font-weight:700;color:#717378;letter-spacing:0.062px;">Opportunity Source:</div><div class="t" style="left:284.70px;top:270.00px;font-size:8.6px;font-weight:400;color:#85878c;letter-spacing:0.024px;">speaking inquiry</div><div class="t" style="left:201.70px;top:289.00px;font-size:7.8px;font-weight:700;color:#717378;letter-spacing:0.061px;">Opportunity Value:</div><div class="t" style="left:284.70px;top:288.00px;font-size:8.6px;font-weight:400;color:#85878c;letter-spacing:-0.143px;">$0.00</div><div class="t" style="left:298.20px;top:310.00px;font-size:7.3px;font-weight:400;color:#44464c;letter-spacing:-0.238px;-webkit-text-stroke:0.1px #44464c">Aug 19th, 2:00 pm</div><div class="t" style="left:201.20px;top:336.00px;font-size:9.8px;font-weight:400;color:#1f2023;letter-spacing:-0.027px;-webkit-text-stroke:0.25px #1f2023">DeGroot Degroot</div><div class="t" style="left:201.70px;top:370.00px;font-size:7.8px;font-weight:700;color:#717378;letter-spacing:0.062px;">Opportunity Source:</div><div class="t" style="left:284.70px;top:369.00px;font-size:8.6px;font-weight:400;color:#85878c;letter-spacing:0.024px;">speaking inquiry</div><div class="t" style="left:201.70px;top:388.00px;font-size:7.8px;font-weight:700;color:#717378;letter-spacing:0.061px;">Opportunity Value:</div><div class="t" style="left:284.70px;top:387.00px;font-size:8.6px;font-weight:400;color:#85878c;letter-spacing:-0.143px;">$0.00</div><div class="t" style="left:298.20px;top:409.00px;font-size:7.3px;font-weight:400;color:#44464c;letter-spacing:-0.238px;-webkit-text-stroke:0.1px #44464c">Aug 21st, 12:00 pm</div><div class="t" style="left:201.20px;top:435.00px;font-size:9.8px;font-weight:400;color:#1f2023;letter-spacing:0.059px;-webkit-text-stroke:0.25px #1f2023">Chris Cushing</div><div class="t" style="left:201.70px;top:468.00px;font-size:7.8px;font-weight:700;color:#717378;letter-spacing:0.061px;">Opportunity Value:</div><div class="t" style="left:280.20px;top:467.00px;font-size:8.6px;font-weight:400;color:#85878c;letter-spacing:-0.432px;">$10,000.00</div><div class="t" style="left:201.20px;top:515.00px;font-size:9.8px;font-weight:400;color:#1f2023;letter-spacing:0.044px;-webkit-text-stroke:0.25px #1f2023">Corey Gerheim</div><div class="t" style="left:201.70px;top:548.00px;font-size:7.8px;font-weight:700;color:#717378;letter-spacing:0.062px;">Opportunity Source:</div><div class="t" style="left:284.70px;top:548.00px;font-size:8.6px;font-weight:400;color:#85878c;letter-spacing:0.024px;">speaking inquiry</div><div class="t" style="left:201.70px;top:567.00px;font-size:7.8px;font-weight:700;color:#717378;letter-spacing:0.061px;">Opportunity Value:</div><div class="t" style="left:284.70px;top:566.00px;font-size:8.6px;font-weight:400;color:#85878c;letter-spacing:-0.270px;">$3,000.00</div><div class="t" style="left:400.10px;top:174.00px;font-size:8.9px;font-weight:700;color:#1d1f24;letter-spacing:0.204px;">Call Completed – Proposal Pe...</div><div class="t" style="left:400.10px;top:198.00px;font-size:8.1px;font-weight:400;color:#8a8f98;letter-spacing:0.174px;">2 Opportunities</div><div class="t" style="left:464.30px;top:198.00px;font-size:8.1px;font-weight:400;color:#22242a;letter-spacing:0.098px;-webkit-text-stroke:0.12px #22242a">$30,000.00</div><div class="t" style="left:400.60px;top:238.00px;font-size:9.8px;font-weight:400;color:#1f2023;letter-spacing:0.051px;-webkit-text-stroke:0.25px #1f2023">Selin Ibrahimov</div><div class="t" style="left:401.10px;top:271.00px;font-size:7.8px;font-weight:700;color:#717378;letter-spacing:0.061px;">Opportunity Value:</div><div class="t" style="left:479.60px;top:270.00px;font-size:8.6px;font-weight:400;color:#85878c;letter-spacing:-0.462px;">$15,000.00</div><div class="t" style="left:400.60px;top:318.00px;font-size:9.8px;font-weight:400;color:#1f2023;letter-spacing:-0.120px;-webkit-text-stroke:0.25px #1f2023">GFCU Senior Team Meeting</div><div class="t" style="left:401.10px;top:351.00px;font-size:7.8px;font-weight:700;color:#717378;letter-spacing:0.062px;">Opportunity Source:</div><div class="t" style="left:484.10px;top:350.00px;font-size:8.6px;font-weight:400;color:#85878c;letter-spacing:-0.143px;">Shereen Networking</div><div class="t" style="left:401.10px;top:369.00px;font-size:7.8px;font-weight:700;color:#717378;letter-spacing:0.061px;">Opportunity Value:</div><div class="t" style="left:484.10px;top:368.00px;font-size:8.6px;font-weight:400;color:#85878c;letter-spacing:-0.462px;">$15,000.00</div><div class="t" style="left:599.40px;top:174.00px;font-size:8.9px;font-weight:700;color:#1d1f24;letter-spacing:0.079px;">Gig Booked</div><div class="t" style="left:599.40px;top:198.00px;font-size:8.1px;font-weight:400;color:#8a8f98;letter-spacing:0.041px;">1 Opportunities</div><div class="t" style="left:662.00px;top:198.00px;font-size:8.1px;font-weight:400;color:#22242a;letter-spacing:0.097px;-webkit-text-stroke:0.12px #22242a">$2,000.00</div><div class="t" style="left:599.90px;top:238.00px;font-size:9.8px;font-weight:400;color:#1f2023;letter-spacing:0.003px;-webkit-text-stroke:0.25px #1f2023">Shelby Case</div><div class="t" style="left:600.40px;top:271.00px;font-size:7.8px;font-weight:700;color:#717378;letter-spacing:0.068px;">Business Name:</div><div class="t" style="left:678.90px;top:270.00px;font-size:8.6px;font-weight:400;color:#85878c;letter-spacing:-0.336px;">2025 NWIIWA Women’...</div><div class="t" style="left:600.40px;top:289.00px;font-size:7.8px;font-weight:700;color:#717378;letter-spacing:0.061px;">Opportunity Value:</div><div class="t" style="left:678.90px;top:288.00px;font-size:8.6px;font-weight:400;color:#85878c;letter-spacing:-0.248px;">$2,000.00</div><div class="t" style="left:798.70px;top:174.00px;font-size:8.9px;font-weight:700;color:#1d1f24;letter-spacing:0.118px;">Gig Done</div><div class="t" style="left:798.70px;top:198.00px;font-size:8.1px;font-weight:400;color:#8a8f98;letter-spacing:0.174px;">6 Opportunities</div><div class="t" style="left:863.60px;top:198.00px;font-size:8.1px;font-weight:400;color:#22242a;letter-spacing:0.098px;-webkit-text-stroke:0.12px #22242a">$12,000.00</div><div class="t" style="left:799.20px;top:238.00px;font-size:9.8px;font-weight:400;color:#1f2023;letter-spacing:0.169px;-webkit-text-stroke:0.25px #1f2023">Veronica Dunford</div><div class="t" style="left:799.70px;top:271.00px;font-size:7.8px;font-weight:700;color:#717378;letter-spacing:0.061px;">Opportunity Value:</div><div class="t" style="left:878.20px;top:270.00px;font-size:8.6px;font-weight:400;color:#85878c;letter-spacing:-0.143px;">$0.00</div><div class="t" style="left:799.20px;top:318.00px;font-size:9.8px;font-weight:400;color:#1f2023;letter-spacing:0.052px;-webkit-text-stroke:0.25px #1f2023">Wisconsin Nonprofit Summit 2...</div><div class="t" style="left:799.70px;top:351.00px;font-size:7.8px;font-weight:700;color:#717378;letter-spacing:0.061px;">Opportunity Value:</div><div class="t" style="left:878.20px;top:350.00px;font-size:8.6px;font-weight:400;color:#85878c;letter-spacing:-0.204px;">$5,000.00</div><div class="t" style="left:799.20px;top:398.00px;font-size:9.8px;font-weight:400;color:#1f2023;letter-spacing:-0.030px;-webkit-text-stroke:0.25px #1f2023">Joe Webb</div><div class="t" style="left:799.70px;top:431.00px;font-size:7.8px;font-weight:700;color:#717378;letter-spacing:0.068px;">Business Name:</div><div class="t" style="left:878.20px;top:430.00px;font-size:8.6px;font-weight:400;color:#85878c;letter-spacing:0.040px;">Women in Automotive</div><div class="t" style="left:799.70px;top:449.00px;font-size:7.8px;font-weight:700;color:#717378;letter-spacing:0.061px;">Opportunity Value:</div><div class="t" style="left:878.20px;top:448.00px;font-size:8.6px;font-weight:400;color:#85878c;letter-spacing:-0.204px;">$5,000.00</div><div class="t" style="left:799.20px;top:496.00px;font-size:9.8px;font-weight:400;color:#1f2023;letter-spacing:-0.085px;-webkit-text-stroke:0.25px #1f2023">Sophie Kline</div><div class="t" style="left:799.70px;top:529.00px;font-size:7.8px;font-weight:700;color:#717378;letter-spacing:0.068px;">Business Name:</div><div class="t" style="left:878.20px;top:528.00px;font-size:8.6px;font-weight:400;color:#85878c;letter-spacing:-0.287px;">Illinois CASA State Co...</div><div class="t" style="left:799.70px;top:548.00px;font-size:7.8px;font-weight:700;color:#717378;letter-spacing:0.061px;">Opportunity Value:</div><div class="t" style="left:878.20px;top:547.00px;font-size:8.6px;font-weight:400;color:#85878c;letter-spacing:-0.426px;">$1,000.00</div><div class="t" style="left:799.20px;top:595.00px;font-size:9.8px;font-weight:400;color:#1f2023;letter-spacing:0.185px;-webkit-text-stroke:0.25px #1f2023">Monica Jagiella</div><div class="t" style="left:799.70px;top:628.00px;font-size:7.8px;font-weight:700;color:#717378;letter-spacing:0.062px;">Opportunity Source:</div><div class="t" style="left:799.70px;top:647.00px;font-size:7.8px;font-weight:700;color:#717378;letter-spacing:0.061px;">Opportunity Value:</div><div class="t" style="left:998.00px;top:174.00px;font-size:8.9px;font-weight:700;color:#1d1f24;letter-spacing:0.281px;">Long Term Nurture</div><div class="t" style="left:998.00px;top:198.00px;font-size:8.1px;font-weight:400;color:#8a8f98;letter-spacing:0.162px;">33 Opportunities</div><div class="t" style="left:1067.00px;top:198.00px;font-size:8.1px;font-weight:400;color:#22242a;letter-spacing:0.099px;-webkit-text-stroke:0.12px #22242a">$102,500.00</div><div class="t" style="left:998.50px;top:238.00px;font-size:9.8px;font-weight:400;color:#1f2023;letter-spacing:0.098px;-webkit-text-stroke:0.25px #1f2023">Thomas Cifranik</div><div class="t" style="left:999.00px;top:271.00px;font-size:7.8px;font-weight:700;color:#717378;letter-spacing:0.062px;">Opportunity Source:</div><div class="t" style="left:1082.00px;top:270.00px;font-size:8.6px;font-weight:400;color:#85878c;letter-spacing:0.024px;">speaking inquiry</div><div class="t" style="left:999.00px;top:289.00px;font-size:7.8px;font-weight:700;color:#717378;letter-spacing:0.061px;">Opportunity Value:</div><div class="t" style="left:1082.00px;top:288.00px;font-size:8.6px;font-weight:400;color:#85878c;letter-spacing:-0.143px;">$0.00</div><div class="t" style="left:998.50px;top:336.00px;font-size:9.8px;font-weight:400;color:#1f2023;letter-spacing:-0.004px;-webkit-text-stroke:0.25px #1f2023">Chloe Plum</div><div class="t" style="left:999.00px;top:369.00px;font-size:7.8px;font-weight:700;color:#717378;letter-spacing:0.062px;">Opportunity Source:</div><div class="t" style="left:1082.00px;top:368.00px;font-size:8.6px;font-weight:400;color:#85878c;letter-spacing:0.024px;">speaking inquiry</div><div class="t" style="left:999.00px;top:388.00px;font-size:7.8px;font-weight:700;color:#717378;letter-spacing:0.061px;">Opportunity Value:</div><div class="t" style="left:1082.00px;top:387.00px;font-size:8.6px;font-weight:400;color:#85878c;letter-spacing:-0.143px;">$0.00</div><div class="t" style="left:998.50px;top:435.00px;font-size:9.8px;font-weight:400;color:#1f2023;letter-spacing:-0.014px;-webkit-text-stroke:0.25px #1f2023">Stephanie Scheller</div><div class="t" style="left:999.00px;top:468.00px;font-size:7.8px;font-weight:700;color:#717378;letter-spacing:0.061px;">Opportunity Value:</div><div class="t" style="left:1077.50px;top:467.00px;font-size:8.6px;font-weight:400;color:#85878c;letter-spacing:-0.204px;">$5,000.00</div><div class="t" style="left:998.50px;top:515.00px;font-size:9.8px;font-weight:400;color:#1f2023;letter-spacing:0.188px;-webkit-text-stroke:0.25px #1f2023">Jamarr John Johnson</div><div class="t" style="left:999.00px;top:548.00px;font-size:7.8px;font-weight:700;color:#717378;letter-spacing:0.061px;">Opportunity Value:</div><div class="t" style="left:1077.50px;top:547.00px;font-size:8.6px;font-weight:400;color:#85878c;letter-spacing:-0.204px;">$5,000.00</div><div class="t" style="left:998.50px;top:595.00px;font-size:9.8px;font-weight:400;color:#1f2023;letter-spacing:-0.183px;-webkit-text-stroke:0.25px #1f2023">Joyce H. Price</div><div class="t" style="left:999.00px;top:628.00px;font-size:7.8px;font-weight:700;color:#717378;letter-spacing:0.062px;">Opportunity Source:</div><div class="t" style="left:999.00px;top:647.00px;font-size:7.8px;font-weight:700;color:#717378;letter-spacing:0.061px;">Opportunity Value:</div></body></html>
